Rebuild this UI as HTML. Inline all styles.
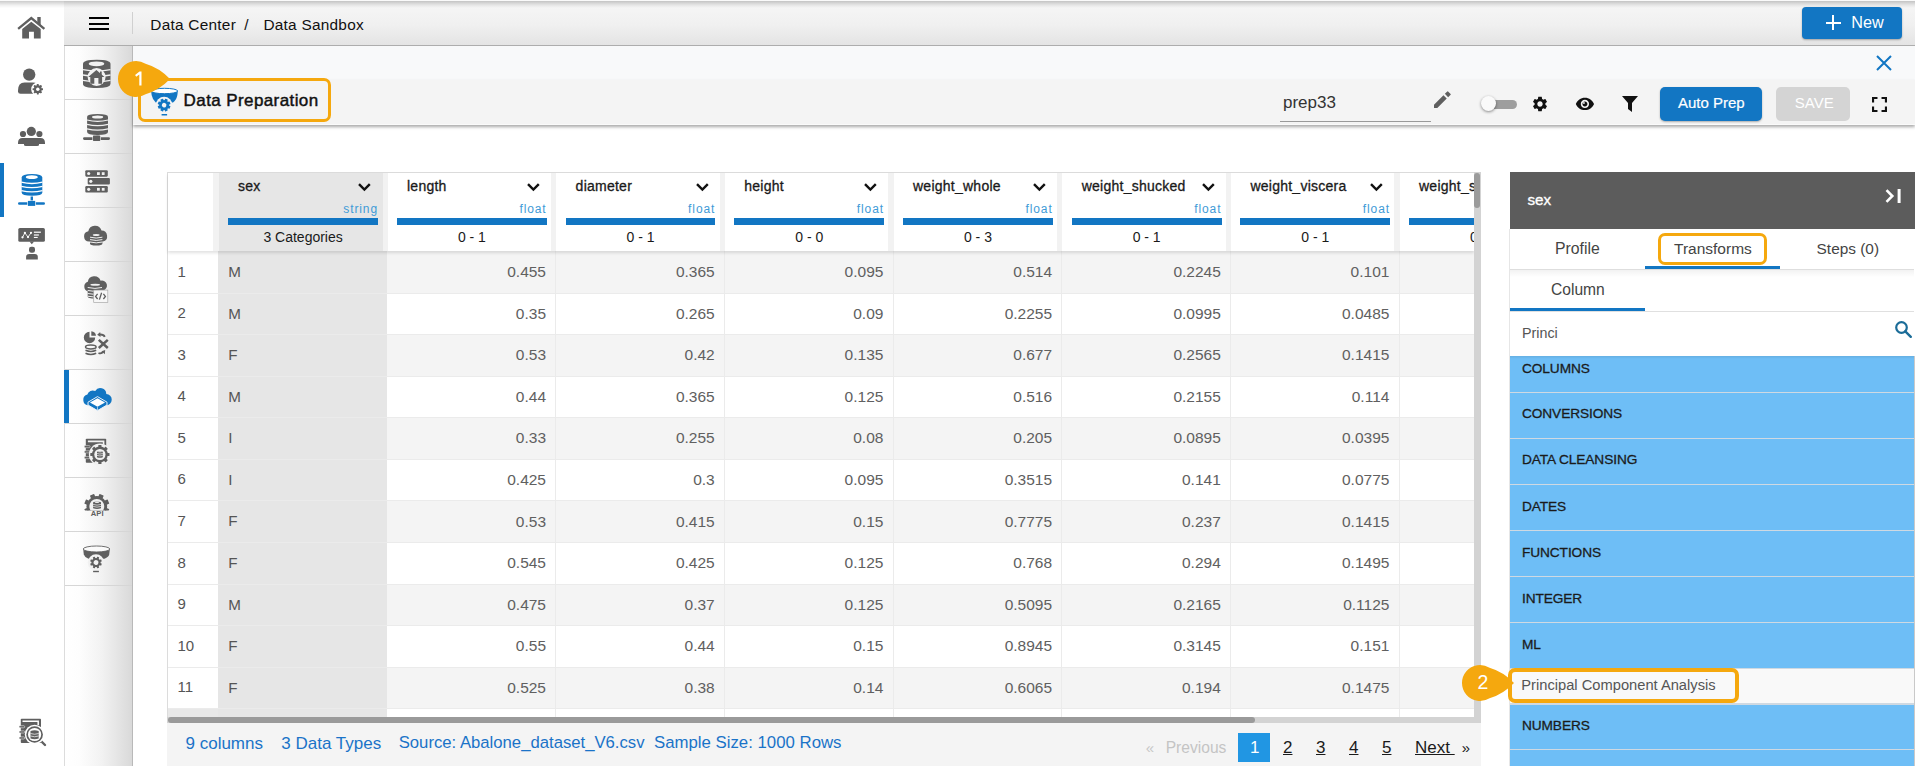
<!DOCTYPE html>
<html><head><meta charset="utf-8"><style>
*{box-sizing:border-box;margin:0;padding:0}
html,body{width:1915px;height:766px;overflow:hidden;background:#fff;font-family:"Liberation Sans",sans-serif;color:#222}
.a{position:absolute}
.t{position:absolute;white-space:pre;line-height:1}
svg{display:block;overflow:visible}
</style></head><body>
<div class="a" style="left:0px;top:0px;width:64px;height:766px;background:#fff;"></div>
<div class="a" style="left:64px;top:0px;width:1851px;height:46px;background:linear-gradient(#f5f5f5 15%,#f0f0f0 55%,#e4e4e4);border-bottom:1px solid #adadad"></div>
<div class="a" style="left:0px;top:1px;width:1915px;height:7px;background:linear-gradient(rgba(0,0,0,.20),rgba(0,0,0,.06) 60%,rgba(0,0,0,0));"></div>
<div class="a" style="left:0px;top:0px;width:1915px;height:1px;background:#fafafa;"></div>
<svg class="a" style="left:12px;top:8px" width="40" height="40" viewBox="0 0 40 40"><path d="M7 20.2 L19.3 10 L31.5 20.2" stroke="#5f5f5f" stroke-width="2.3" fill="none" stroke-linecap="square"/><path d="M25.3 9.1 H28.7 V17.2 L25.3 14.4z" fill="#5f5f5f"/><path d="M10.2 21 L19.3 13.8 L28.7 21 V30.5 H21.9 V23.8 H17 V30.5 H10.2z" fill="#5f5f5f"/></svg>
<svg class="a" style="left:10px;top:55px" width="40" height="40" viewBox="0 0 40 40"><circle cx="19.2" cy="19.6" r="6.2" fill="#5f5f5f"/><path d="M8 35.5 Q8 27.4 14.5 27.4 H23 Q25.5 27.4 26.5 28.5 L24 38.8 H10.5 Q8 38.8 8 36.5z" fill="#5f5f5f"/><circle cx="27.8" cy="34.2" r="6.6" fill="#fff"/><g transform="translate(27.8 34.2) rotate(0)"><circle r="3.9" fill="#5f5f5f"/><rect x="-1.0" y="-5.2" width="2.0" height="2.3000000000000003" rx=".4" fill="#5f5f5f" transform="rotate(0.0)"/><rect x="-1.0" y="-5.2" width="2.0" height="2.3000000000000003" rx=".4" fill="#5f5f5f" transform="rotate(45.0)"/><rect x="-1.0" y="-5.2" width="2.0" height="2.3000000000000003" rx=".4" fill="#5f5f5f" transform="rotate(90.0)"/><rect x="-1.0" y="-5.2" width="2.0" height="2.3000000000000003" rx=".4" fill="#5f5f5f" transform="rotate(135.0)"/><rect x="-1.0" y="-5.2" width="2.0" height="2.3000000000000003" rx=".4" fill="#5f5f5f" transform="rotate(180.0)"/><rect x="-1.0" y="-5.2" width="2.0" height="2.3000000000000003" rx=".4" fill="#5f5f5f" transform="rotate(225.0)"/><rect x="-1.0" y="-5.2" width="2.0" height="2.3000000000000003" rx=".4" fill="#5f5f5f" transform="rotate(270.0)"/><rect x="-1.0" y="-5.2" width="2.0" height="2.3000000000000003" rx=".4" fill="#5f5f5f" transform="rotate(315.0)"/><circle r="1.7" fill="#fff"/></g></svg>
<svg class="a" style="left:10px;top:116px" width="40" height="40" viewBox="0 0 40 40"><circle cx="21.3" cy="15.4" r="4.6" fill="#5f5f5f"/><circle cx="13" cy="18" r="3.1" fill="#5f5f5f"/><circle cx="29.4" cy="18" r="3.1" fill="#5f5f5f"/><path d="M8 27 Q8 22 12.5 22 H30.5 Q35 22 35 27 V28 H29 V29 Q29 30 27 30 H16 Q14 30 14 29 V28 H8z" fill="#5f5f5f"/></svg>
<svg class="a" style="left:12px;top:168px" width="40" height="40" viewBox="0 0 40 40"><path d="M9.7 9.5 Q9.7 6 20 6 Q30.3 6 30.3 9.5 V24.5 Q30.3 27.7 20 27.7 Q9.7 27.7 9.7 24.5z" fill="#1276c3"/><ellipse cx="19.8" cy="9.2" rx="6" ry="1.9" fill="#fff"/><path d="M9.3 14.2 Q19.9 16.8 30.5 14.2" stroke="#fff" stroke-width="1.25" fill="none"/><path d="M9.3 18.4 Q19.9 21.0 30.5 18.4" stroke="#fff" stroke-width="1.25" fill="none"/><path d="M9.3 22.6 Q19.9 25.200000000000003 30.5 22.6" stroke="#fff" stroke-width="1.25" fill="none"/><rect x="18.6" y="28.5" width="2.4" height="4.5" fill="#1276c3"/><rect x="6" y="34.2" width="27" height="2.6" rx="1.3" fill="#1276c3"/><rect x="15.3" y="32.4" width="8.5" height="6" fill="#fff"/><rect x="15.9" y="32.9" width="7.3" height="5" fill="#1276c3"/></svg>
<svg class="a" style="left:12px;top:222px" width="40" height="40" viewBox="0 0 40 40"><rect x="6.3" y="6" width="26.6" height="13.8" rx="1.6" fill="#5f5f5f"/><path d="M17.5 19.6 L19.8 22.3 L22.1 19.6z" fill="#5f5f5f"/><path d="M10.5 15.3 L12.9 10.9 L16 15.1 L19 10.8" stroke="#fff" stroke-width=".9" fill="none"/><circle cx="10.5" cy="15.3" r="1.15" fill="#fff"/><circle cx="12.9" cy="10.9" r="1.15" fill="#fff"/><circle cx="16" cy="15.1" r="1.15" fill="#fff"/><circle cx="19" cy="10.8" r="1.15" fill="#fff"/><rect x="21.9" y="9.6" width="7" height="1.2" fill="#fff"/><rect x="21.9" y="12.4" width="5" height="1.2" fill="#fff"/><rect x="21.9" y="14.9" width="3.8" height="1.1" fill="#fff"/><rect x="17" y="24.8" width="6" height="6" rx="2.3" fill="#5f5f5f"/><path d="M14.1 37.6 V35 Q14.1 32.1 17 32.1 H23 Q25.8 32.1 25.8 35 V37.6z" fill="#5f5f5f"/></svg>
<svg class="a" style="left:10px;top:700px" width="40" height="40" viewBox="0 0 40 40"><rect x="10.8" y="18.8" width="20.2" height="24.3" rx=".8" fill="#5f5f5f"/><path d="M12.5 21.3 H28.2 V25" stroke="#fff" stroke-width="1.5" fill="none"/><rect x="9" y="25.7" width="5.7" height="2.1" rx="1" fill="#5f5f5f" stroke="#fff" stroke-width=".5"/><rect x="9" y="30.9" width="5.7" height="2.1" rx="1" fill="#5f5f5f" stroke="#fff" stroke-width=".5"/><rect x="9" y="36.9" width="5.7" height="2.1" rx="1" fill="#5f5f5f" stroke="#fff" stroke-width=".5"/><path d="M31 41 L35 45" stroke="#5f5f5f" stroke-width="2.4" stroke-linecap="round"/><circle cx="24.6" cy="34.5" r="9.8" fill="#fff"/><circle cx="24.6" cy="34.5" r="8.3" fill="#5f5f5f"/><circle cx="24.6" cy="34.5" r="6.6" fill="#fff"/><path d="M20.5 31 Q24.6 29.5 28.7 31 V38.5 Q24.6 40 20.5 38.5z" fill="#5f5f5f"/><path d="M20.5 33.5 Q24.6 35 28.7 33.5 M20.5 36 Q24.6 37.5 28.7 36" stroke="#fff" stroke-width=".7" fill="none"/></svg>
<div class="a" style="left:0px;top:163px;width:4px;height:54px;background:#1276c3;"></div>
<div class="a" style="left:89px;top:17px;width:20px;height:2px;background:#000;"></div>
<div class="a" style="left:89px;top:22.5px;width:20px;height:2px;background:#000;"></div>
<div class="a" style="left:89px;top:28px;width:20px;height:2px;background:#000;"></div>
<div class="a" style="left:132px;top:12px;width:1px;height:22px;background:#d0d0d0;"></div>
<div class="t " style="left:150.30px;top:16.56px;font-size:15.4px;color:#111;letter-spacing:.25px">Data Center</div>
<div class="t " style="left:244.30px;top:16.56px;font-size:15.4px;color:#111;">/</div>
<div class="t " style="left:263.40px;top:16.56px;font-size:15.4px;color:#111;letter-spacing:.25px">Data Sandbox</div>
<div class="a" style="left:1802px;top:7px;width:100px;height:32px;background:#1276c3;border-radius:4px;box-shadow:0 1px 2px rgba(0,0,0,.3)"></div>
<div class="a" style="left:1825.8px;top:21.5px;width:15.2px;height:2.2px;background:#fff;"></div>
<div class="a" style="left:1832.3px;top:14.8px;width:2.2px;height:15.4px;background:#fff;"></div>
<div class="t " style="left:1851.30px;top:14.48px;font-size:16.2px;color:#fff;">New</div>
<div class="a" style="left:64px;top:46px;width:69px;height:720px;background:linear-gradient(90deg,#fff 0%,#fdfdfd 22%,#f2f2f2 55%,#d9d9d9 100%);border-right:1px solid #b9b9b9;border-left:1px solid #dcdcdc"></div>
<div class="a" style="left:65px;top:99px;width:67px;height:1px;background:#d6d6d6;"></div>
<div class="a" style="left:65px;top:153px;width:67px;height:1px;background:#d6d6d6;"></div>
<div class="a" style="left:65px;top:207px;width:67px;height:1px;background:#d6d6d6;"></div>
<div class="a" style="left:65px;top:261px;width:67px;height:1px;background:#d6d6d6;"></div>
<div class="a" style="left:65px;top:315px;width:67px;height:1px;background:#d6d6d6;"></div>
<div class="a" style="left:65px;top:369px;width:67px;height:1px;background:#d6d6d6;"></div>
<div class="a" style="left:65px;top:423px;width:67px;height:1px;background:#d6d6d6;"></div>
<div class="a" style="left:65px;top:477px;width:67px;height:1px;background:#d6d6d6;"></div>
<div class="a" style="left:65px;top:531px;width:67px;height:1px;background:#d6d6d6;"></div>
<div class="a" style="left:65px;top:585px;width:67px;height:1px;background:#d6d6d6;"></div>
<div class="a" style="left:64px;top:370px;width:5px;height:53px;background:#1276c3;"></div>
<div class="a" style="left:133px;top:46px;width:1782px;height:34px;background:#f8f9fa;"></div>
<div class="a" style="left:133px;top:80px;width:1782px;height:45px;background:#f4f4f4;border-bottom:1px solid #fafafa;box-shadow:0 2px 3px rgba(0,0,0,.34)"></div>
<svg class="a" style="left:1876px;top:55px;" width="16" height="16" viewBox="0 0 16 16"><path d="M1 1 L15 15 M15 1 L1 15" stroke="#1276c3" stroke-width="2"/></svg>
<svg class="a" style="left:110px;top:55px" width="80" height="70" viewBox="0 0 80 70"><path d="M41.1 36 L41.6 40 Q42.5 44.5 45.7 47.5 L63 47.5 Q66.7 44.5 67.4 40 L67.8 36z" fill="#1276c3"/><ellipse cx="54.4" cy="36" rx="13.3" ry="2.7" fill="#fff" stroke="#1276c3" stroke-width="1"/><circle cx="54.1" cy="50.1" r="8.3" fill="#f4f4f4"/><g transform="translate(54.1 50.1) rotate(22.5)"><circle r="5.0" fill="#1276c3"/><rect x="-1.45" y="-6.4" width="2.9" height="2.4000000000000004" rx=".4" fill="#1276c3" transform="rotate(0.0)"/><rect x="-1.45" y="-6.4" width="2.9" height="2.4000000000000004" rx=".4" fill="#1276c3" transform="rotate(45.0)"/><rect x="-1.45" y="-6.4" width="2.9" height="2.4000000000000004" rx=".4" fill="#1276c3" transform="rotate(90.0)"/><rect x="-1.45" y="-6.4" width="2.9" height="2.4000000000000004" rx=".4" fill="#1276c3" transform="rotate(135.0)"/><rect x="-1.45" y="-6.4" width="2.9" height="2.4000000000000004" rx=".4" fill="#1276c3" transform="rotate(180.0)"/><rect x="-1.45" y="-6.4" width="2.9" height="2.4000000000000004" rx=".4" fill="#1276c3" transform="rotate(225.0)"/><rect x="-1.45" y="-6.4" width="2.9" height="2.4000000000000004" rx=".4" fill="#1276c3" transform="rotate(270.0)"/><rect x="-1.45" y="-6.4" width="2.9" height="2.4000000000000004" rx=".4" fill="#1276c3" transform="rotate(315.0)"/><circle r="2.3" fill="#f4f4f4"/></g><rect x="51.6" y="59" width="5.5" height="1.5" fill="#1276c3"/></svg>
<div class="t " style="left:183.60px;top:91.91px;font-size:17px;color:#111;letter-spacing:.4px;-webkit-text-stroke:.45px #111">Data Preparation</div>
<div class="a" style="left:138px;top:78px;width:193px;height:43.5px;background:transparent;border:3.9px solid #f5a80e;border-radius:7px"></div>
<div class="t " style="left:1283.00px;top:94.31px;font-size:17px;color:#333;">prep33</div>
<div class="a" style="left:1280px;top:121px;width:151px;height:1px;background:#9a9a9a;"></div>
<svg class="a" style="left:1434px;top:90.8px;" width="17" height="17" viewBox="0 0 18 18"><path d="M0 14.5 V18 H3.5 L13.5 8 L10 4.5z M11.5 3 L15 6.5 L17.6 3.9 Q18 3.5 17.6 3.1 L14.9 0.4 Q14.5 0 14.1 0.4z" fill="#5f5f5f"/></svg>
<div class="a" style="left:1488px;top:99.5px;width:29px;height:9.5px;background:#9e9e9e;border-radius:5px"></div>
<div class="a" style="left:1481px;top:96px;width:15px;height:15px;background:#fafafa;border-radius:50%;box-shadow:0 1px 3px rgba(0,0,0,.45)"></div>
<svg class="a" style="left:1531.1px;top:94.8px" width="18" height="18" viewBox="0 0 24 24"><path fill="#111" fill-rule="evenodd" d="M19.14 12.94c.04-.3.06-.61.06-.94 0-.32-.02-.64-.07-.94l2.03-1.58c.18-.14.23-.41.12-.61l-1.92-3.32c-.12-.22-.37-.29-.59-.22l-2.39.96c-.5-.38-1.03-.7-1.62-.94l-.36-2.54c-.04-.24-.24-.41-.48-.41h-3.84c-.24 0-.43.17-.47.41l-.36 2.54c-.59.24-1.130.57-1.62.94l-2.39-.96c-.22-.08-.47 0-.59.22L2.74 8.87c-.12.21-.08.47.12.61l2.03 1.58c-.05.3-.09.63-.09.94s.02.64.07.94l-2.030 1.58c-.18.14-.23.41-.12.61l1.92 3.32c.12.22.37.29.59.22l2.39-.96c.5.38 1.03.7 1.62.94l.36 2.54c.05.24.24.41.48.41h3.84c.24 0 .44-.17.47-.41l.36-2.54c.59-.24 1.13-.56 1.62-.94l2.39.96c.22.08.47 0 .59-.22l1.92-3.32c.12-.22.07-.47-.12-.61l-2.01-1.58zM12 15.6c-1.98 0-3.6-1.62-3.6-3.6s1.62-3.6 3.6-3.6 3.6 1.620 3.6 3.6-1.62 3.6-3.6 3.6z"/></svg>
<svg class="a" style="left:1575px;top:94.2px" width="19.85" height="19.85" viewBox="0 0 24 24"><path fill="#111" d="M12 4.5C7 4.5 2.730 7.61 1 12c1.73 4.39 6 7.5 11 7.5s9.27-3.11 11-7.5c-1.73-4.39-6-7.5-11-7.5zM12 17c-2.76 0-5-2.24-5-5s2.24-5 5-5 5 2.24 5 5-2.24 5-5 5zm0-8c-1.66 0-3 1.34-3 3s1.34 3 3 3 3-1.34 3-3-1.34-3-3-3z"/><circle cx="10.8" cy="10.9" r="1.1" fill="#f4f4f4"/></svg>
<svg class="a" style="left:1622px;top:96px;" width="16" height="16" viewBox="0 0 16 16"><path d="M0 0 H16 L10 7 V16 L6 13 V7z" fill="#111"/></svg>
<div class="a" style="left:1660px;top:87px;width:102px;height:34px;background:#1276c3;border-radius:5px;box-shadow:0 1px 2px rgba(0,0,0,.3)"></div>
<div class="t " style="left:1678.00px;top:94.60px;font-size:15px;color:#fff;-webkit-text-stroke:.2px #fff">Auto Prep</div>
<div class="a" style="left:1776px;top:87px;width:74px;height:34px;background:#d4d4d4;border-radius:5px"></div>
<div class="t " style="left:1794.80px;top:94.80px;font-size:15px;color:#fff;">SAVE</div>
<svg class="a" style="left:1872px;top:97.2px;" width="15" height="15" viewBox="0 0 17 17"><path d="M1.2 6.2 V1.2 H6.2 M10.8 1.2 H15.8 V6.2 M15.8 10.8 V15.8 H10.8 M6.2 15.8 H1.2 V10.8" stroke="#111" stroke-width="2.4" fill="none"/></svg>
<div class="a" style="left:167px;top:172px;width:1314px;height:550px;background:#fff;border-left:1px solid #dcdcdc;border-top:1px solid #dcdcdc"></div>
<div class="a" style="left:168px;top:251px;width:1306px;height:466px;overflow:hidden">
<div class="a" style="left:219px;top:0.0px;width:1087px;height:41.59px;background:#f4f4f4;"></div>
<div class="a" style="left:0px;top:0.0px;width:50px;height:41.59px;background:#fff;"></div>
<div class="a" style="left:50px;top:0.0px;width:169px;height:41.59px;background:#e6e6e6;"></div>
<div class="a" style="left:219px;top:41.59000000000003px;width:1087px;height:41.59px;background:#fff;"></div>
<div class="a" style="left:0px;top:41.59000000000003px;width:50px;height:41.59px;background:#fff;"></div>
<div class="a" style="left:50px;top:41.59000000000003px;width:169px;height:41.59px;background:#e6e6e6;"></div>
<div class="a" style="left:219px;top:83.18px;width:1087px;height:41.59px;background:#f4f4f4;"></div>
<div class="a" style="left:0px;top:83.18px;width:50px;height:41.59px;background:#fff;"></div>
<div class="a" style="left:50px;top:83.18px;width:169px;height:41.59px;background:#e6e6e6;"></div>
<div class="a" style="left:219px;top:124.76999999999998px;width:1087px;height:41.59px;background:#fff;"></div>
<div class="a" style="left:0px;top:124.76999999999998px;width:50px;height:41.59px;background:#fff;"></div>
<div class="a" style="left:50px;top:124.76999999999998px;width:169px;height:41.59px;background:#e6e6e6;"></div>
<div class="a" style="left:219px;top:166.36px;width:1087px;height:41.59px;background:#f4f4f4;"></div>
<div class="a" style="left:0px;top:166.36px;width:50px;height:41.59px;background:#fff;"></div>
<div class="a" style="left:50px;top:166.36px;width:169px;height:41.59px;background:#e6e6e6;"></div>
<div class="a" style="left:219px;top:207.95000000000005px;width:1087px;height:41.59px;background:#fff;"></div>
<div class="a" style="left:0px;top:207.95000000000005px;width:50px;height:41.59px;background:#fff;"></div>
<div class="a" style="left:50px;top:207.95000000000005px;width:169px;height:41.59px;background:#e6e6e6;"></div>
<div class="a" style="left:219px;top:249.54000000000002px;width:1087px;height:41.59px;background:#f4f4f4;"></div>
<div class="a" style="left:0px;top:249.54000000000002px;width:50px;height:41.59px;background:#fff;"></div>
<div class="a" style="left:50px;top:249.54000000000002px;width:169px;height:41.59px;background:#e6e6e6;"></div>
<div class="a" style="left:219px;top:291.13px;width:1087px;height:41.59px;background:#fff;"></div>
<div class="a" style="left:0px;top:291.13px;width:50px;height:41.59px;background:#fff;"></div>
<div class="a" style="left:50px;top:291.13px;width:169px;height:41.59px;background:#e6e6e6;"></div>
<div class="a" style="left:219px;top:332.72px;width:1087px;height:41.59px;background:#f4f4f4;"></div>
<div class="a" style="left:0px;top:332.72px;width:50px;height:41.59px;background:#fff;"></div>
<div class="a" style="left:50px;top:332.72px;width:169px;height:41.59px;background:#e6e6e6;"></div>
<div class="a" style="left:219px;top:374.31000000000006px;width:1087px;height:41.59px;background:#fff;"></div>
<div class="a" style="left:0px;top:374.31000000000006px;width:50px;height:41.59px;background:#fff;"></div>
<div class="a" style="left:50px;top:374.31000000000006px;width:169px;height:41.59px;background:#e6e6e6;"></div>
<div class="a" style="left:219px;top:415.9000000000001px;width:1087px;height:41.59px;background:#f4f4f4;"></div>
<div class="a" style="left:0px;top:415.9000000000001px;width:50px;height:41.59px;background:#fff;"></div>
<div class="a" style="left:50px;top:415.9000000000001px;width:169px;height:41.59px;background:#e6e6e6;"></div>
<div class="a" style="left:219px;top:457.49px;width:1087px;height:41.59px;background:#fff;"></div>
<div class="a" style="left:0px;top:457.49px;width:50px;height:41.59px;background:#e8e8e8;"></div>
<div class="a" style="left:50px;top:457.49px;width:169px;height:41.59px;background:#e6e6e6;"></div>
<div class="a" style="left:0px;top:41.54px;width:1306px;height:1px;background:#ebebeb;"></div>
<div class="a" style="left:0px;top:83.13px;width:1306px;height:1px;background:#ebebeb;"></div>
<div class="a" style="left:0px;top:124.72px;width:1306px;height:1px;background:#ebebeb;"></div>
<div class="a" style="left:0px;top:166.31px;width:1306px;height:1px;background:#ebebeb;"></div>
<div class="a" style="left:0px;top:207.9px;width:1306px;height:1px;background:#ebebeb;"></div>
<div class="a" style="left:0px;top:249.49px;width:1306px;height:1px;background:#ebebeb;"></div>
<div class="a" style="left:0px;top:291.08px;width:1306px;height:1px;background:#ebebeb;"></div>
<div class="a" style="left:0px;top:332.67px;width:1306px;height:1px;background:#ebebeb;"></div>
<div class="a" style="left:0px;top:374.26px;width:1306px;height:1px;background:#ebebeb;"></div>
<div class="a" style="left:0px;top:415.85px;width:1306px;height:1px;background:#ebebeb;"></div>
<div class="a" style="left:0px;top:457.44px;width:1306px;height:1px;background:#ebebeb;"></div>
<div class="a" style="left:0px;top:499.03px;width:1306px;height:1px;background:#ebebeb;"></div>
<div class="a" style="left:387px;top:0px;width:1px;height:466px;background:#ebebeb;"></div>
<div class="a" style="left:556px;top:0px;width:1px;height:466px;background:#ebebeb;"></div>
<div class="a" style="left:725px;top:0px;width:1px;height:466px;background:#ebebeb;"></div>
<div class="a" style="left:893px;top:0px;width:1px;height:466px;background:#ebebeb;"></div>
<div class="a" style="left:1062px;top:0px;width:1px;height:466px;background:#ebebeb;"></div>
<div class="a" style="left:1231px;top:0px;width:1px;height:466px;background:#ebebeb;"></div>
<div class="t " style="left:9.50px;top:12.50px;font-size:15px;color:#555;">1</div>
<div class="t " style="left:60.30px;top:12.93px;font-size:15.2px;color:#555;">M</div>
<div class="t" style="left:258.00px;width:120px;text-align:right;top:13.08px;font-size:15.5px;color:#606060">0.455</div>
<div class="t" style="left:426.70px;width:120px;text-align:right;top:13.08px;font-size:15.5px;color:#606060">0.365</div>
<div class="t" style="left:595.40px;width:120px;text-align:right;top:13.08px;font-size:15.5px;color:#606060">0.095</div>
<div class="t" style="left:764.10px;width:120px;text-align:right;top:13.08px;font-size:15.5px;color:#606060">0.514</div>
<div class="t" style="left:932.80px;width:120px;text-align:right;top:13.08px;font-size:15.5px;color:#606060">0.2245</div>
<div class="t" style="left:1101.40px;width:120px;text-align:right;top:13.08px;font-size:15.5px;color:#606060">0.101</div>
<div class="t " style="left:9.50px;top:54.09px;font-size:15px;color:#555;">2</div>
<div class="t " style="left:60.30px;top:54.52px;font-size:15.2px;color:#555;">M</div>
<div class="t" style="left:258.00px;width:120px;text-align:right;top:54.67px;font-size:15.5px;color:#606060">0.35</div>
<div class="t" style="left:426.70px;width:120px;text-align:right;top:54.67px;font-size:15.5px;color:#606060">0.265</div>
<div class="t" style="left:595.40px;width:120px;text-align:right;top:54.67px;font-size:15.5px;color:#606060">0.09</div>
<div class="t" style="left:764.10px;width:120px;text-align:right;top:54.67px;font-size:15.5px;color:#606060">0.2255</div>
<div class="t" style="left:932.80px;width:120px;text-align:right;top:54.67px;font-size:15.5px;color:#606060">0.0995</div>
<div class="t" style="left:1101.40px;width:120px;text-align:right;top:54.67px;font-size:15.5px;color:#606060">0.0485</div>
<div class="t " style="left:9.50px;top:95.68px;font-size:15px;color:#555;">3</div>
<div class="t " style="left:60.30px;top:96.11px;font-size:15.2px;color:#555;">F</div>
<div class="t" style="left:258.00px;width:120px;text-align:right;top:96.26px;font-size:15.5px;color:#606060">0.53</div>
<div class="t" style="left:426.70px;width:120px;text-align:right;top:96.26px;font-size:15.5px;color:#606060">0.42</div>
<div class="t" style="left:595.40px;width:120px;text-align:right;top:96.26px;font-size:15.5px;color:#606060">0.135</div>
<div class="t" style="left:764.10px;width:120px;text-align:right;top:96.26px;font-size:15.5px;color:#606060">0.677</div>
<div class="t" style="left:932.80px;width:120px;text-align:right;top:96.26px;font-size:15.5px;color:#606060">0.2565</div>
<div class="t" style="left:1101.40px;width:120px;text-align:right;top:96.26px;font-size:15.5px;color:#606060">0.1415</div>
<div class="t " style="left:9.50px;top:137.27px;font-size:15px;color:#555;">4</div>
<div class="t " style="left:60.30px;top:137.70px;font-size:15.2px;color:#555;">M</div>
<div class="t" style="left:258.00px;width:120px;text-align:right;top:137.85px;font-size:15.5px;color:#606060">0.44</div>
<div class="t" style="left:426.70px;width:120px;text-align:right;top:137.85px;font-size:15.5px;color:#606060">0.365</div>
<div class="t" style="left:595.40px;width:120px;text-align:right;top:137.85px;font-size:15.5px;color:#606060">0.125</div>
<div class="t" style="left:764.10px;width:120px;text-align:right;top:137.85px;font-size:15.5px;color:#606060">0.516</div>
<div class="t" style="left:932.80px;width:120px;text-align:right;top:137.85px;font-size:15.5px;color:#606060">0.2155</div>
<div class="t" style="left:1101.40px;width:120px;text-align:right;top:137.85px;font-size:15.5px;color:#606060">0.114</div>
<div class="t " style="left:9.50px;top:178.86px;font-size:15px;color:#555;">5</div>
<div class="t " style="left:60.30px;top:179.29px;font-size:15.2px;color:#555;">I</div>
<div class="t" style="left:258.00px;width:120px;text-align:right;top:179.44px;font-size:15.5px;color:#606060">0.33</div>
<div class="t" style="left:426.70px;width:120px;text-align:right;top:179.44px;font-size:15.5px;color:#606060">0.255</div>
<div class="t" style="left:595.40px;width:120px;text-align:right;top:179.44px;font-size:15.5px;color:#606060">0.08</div>
<div class="t" style="left:764.10px;width:120px;text-align:right;top:179.44px;font-size:15.5px;color:#606060">0.205</div>
<div class="t" style="left:932.80px;width:120px;text-align:right;top:179.44px;font-size:15.5px;color:#606060">0.0895</div>
<div class="t" style="left:1101.40px;width:120px;text-align:right;top:179.44px;font-size:15.5px;color:#606060">0.0395</div>
<div class="t " style="left:9.50px;top:220.45px;font-size:15px;color:#555;">6</div>
<div class="t " style="left:60.30px;top:220.88px;font-size:15.2px;color:#555;">I</div>
<div class="t" style="left:258.00px;width:120px;text-align:right;top:221.03px;font-size:15.5px;color:#606060">0.425</div>
<div class="t" style="left:426.70px;width:120px;text-align:right;top:221.03px;font-size:15.5px;color:#606060">0.3</div>
<div class="t" style="left:595.40px;width:120px;text-align:right;top:221.03px;font-size:15.5px;color:#606060">0.095</div>
<div class="t" style="left:764.10px;width:120px;text-align:right;top:221.03px;font-size:15.5px;color:#606060">0.3515</div>
<div class="t" style="left:932.80px;width:120px;text-align:right;top:221.03px;font-size:15.5px;color:#606060">0.141</div>
<div class="t" style="left:1101.40px;width:120px;text-align:right;top:221.03px;font-size:15.5px;color:#606060">0.0775</div>
<div class="t " style="left:9.50px;top:262.04px;font-size:15px;color:#555;">7</div>
<div class="t " style="left:60.30px;top:262.47px;font-size:15.2px;color:#555;">F</div>
<div class="t" style="left:258.00px;width:120px;text-align:right;top:262.62px;font-size:15.5px;color:#606060">0.53</div>
<div class="t" style="left:426.70px;width:120px;text-align:right;top:262.62px;font-size:15.5px;color:#606060">0.415</div>
<div class="t" style="left:595.40px;width:120px;text-align:right;top:262.62px;font-size:15.5px;color:#606060">0.15</div>
<div class="t" style="left:764.10px;width:120px;text-align:right;top:262.62px;font-size:15.5px;color:#606060">0.7775</div>
<div class="t" style="left:932.80px;width:120px;text-align:right;top:262.62px;font-size:15.5px;color:#606060">0.237</div>
<div class="t" style="left:1101.40px;width:120px;text-align:right;top:262.62px;font-size:15.5px;color:#606060">0.1415</div>
<div class="t " style="left:9.50px;top:303.63px;font-size:15px;color:#555;">8</div>
<div class="t " style="left:60.30px;top:304.06px;font-size:15.2px;color:#555;">F</div>
<div class="t" style="left:258.00px;width:120px;text-align:right;top:304.21px;font-size:15.5px;color:#606060">0.545</div>
<div class="t" style="left:426.70px;width:120px;text-align:right;top:304.21px;font-size:15.5px;color:#606060">0.425</div>
<div class="t" style="left:595.40px;width:120px;text-align:right;top:304.21px;font-size:15.5px;color:#606060">0.125</div>
<div class="t" style="left:764.10px;width:120px;text-align:right;top:304.21px;font-size:15.5px;color:#606060">0.768</div>
<div class="t" style="left:932.80px;width:120px;text-align:right;top:304.21px;font-size:15.5px;color:#606060">0.294</div>
<div class="t" style="left:1101.40px;width:120px;text-align:right;top:304.21px;font-size:15.5px;color:#606060">0.1495</div>
<div class="t " style="left:9.50px;top:345.22px;font-size:15px;color:#555;">9</div>
<div class="t " style="left:60.30px;top:345.65px;font-size:15.2px;color:#555;">M</div>
<div class="t" style="left:258.00px;width:120px;text-align:right;top:345.80px;font-size:15.5px;color:#606060">0.475</div>
<div class="t" style="left:426.70px;width:120px;text-align:right;top:345.80px;font-size:15.5px;color:#606060">0.37</div>
<div class="t" style="left:595.40px;width:120px;text-align:right;top:345.80px;font-size:15.5px;color:#606060">0.125</div>
<div class="t" style="left:764.10px;width:120px;text-align:right;top:345.80px;font-size:15.5px;color:#606060">0.5095</div>
<div class="t" style="left:932.80px;width:120px;text-align:right;top:345.80px;font-size:15.5px;color:#606060">0.2165</div>
<div class="t" style="left:1101.40px;width:120px;text-align:right;top:345.80px;font-size:15.5px;color:#606060">0.1125</div>
<div class="t " style="left:9.50px;top:386.81px;font-size:15px;color:#555;">10</div>
<div class="t " style="left:60.30px;top:387.24px;font-size:15.2px;color:#555;">F</div>
<div class="t" style="left:258.00px;width:120px;text-align:right;top:387.39px;font-size:15.5px;color:#606060">0.55</div>
<div class="t" style="left:426.70px;width:120px;text-align:right;top:387.39px;font-size:15.5px;color:#606060">0.44</div>
<div class="t" style="left:595.40px;width:120px;text-align:right;top:387.39px;font-size:15.5px;color:#606060">0.15</div>
<div class="t" style="left:764.10px;width:120px;text-align:right;top:387.39px;font-size:15.5px;color:#606060">0.8945</div>
<div class="t" style="left:932.80px;width:120px;text-align:right;top:387.39px;font-size:15.5px;color:#606060">0.3145</div>
<div class="t" style="left:1101.40px;width:120px;text-align:right;top:387.39px;font-size:15.5px;color:#606060">0.151</div>
<div class="t " style="left:9.50px;top:428.40px;font-size:15px;color:#555;">11</div>
<div class="t " style="left:60.30px;top:428.83px;font-size:15.2px;color:#555;">F</div>
<div class="t" style="left:258.00px;width:120px;text-align:right;top:428.98px;font-size:15.5px;color:#606060">0.525</div>
<div class="t" style="left:426.70px;width:120px;text-align:right;top:428.98px;font-size:15.5px;color:#606060">0.38</div>
<div class="t" style="left:595.40px;width:120px;text-align:right;top:428.98px;font-size:15.5px;color:#606060">0.14</div>
<div class="t" style="left:764.10px;width:120px;text-align:right;top:428.98px;font-size:15.5px;color:#606060">0.6065</div>
<div class="t" style="left:932.80px;width:120px;text-align:right;top:428.98px;font-size:15.5px;color:#606060">0.194</div>
<div class="t" style="left:1101.40px;width:120px;text-align:right;top:428.98px;font-size:15.5px;color:#606060">0.1475</div>
</div>
<div class="a" style="left:168px;top:173px;width:1306px;height:78px;overflow:hidden;box-shadow:0 2px 3px rgba(0,0,0,.12)">
<div class="a" style="left:0px;top:0px;width:1306px;height:78px;background:#f2f2f2;"></div>
<div class="a" style="left:0px;top:0px;width:45px;height:78px;background:#fff;"></div>
<div class="a" style="left:50.5px;top:0px;width:164px;height:78px;background:#e6e6e6;"></div>
<div class="t " style="left:70.00px;top:6.45px;font-size:14px;color:#1a1a1a;letter-spacing:.25px;-webkit-text-stroke:.3px #1a1a1a">sex</div>
<svg class="a" style="left:190.3px;top:9.800000000000011px;" width="12.8" height="7.8" viewBox="0 0 12.8 7.8"><path d="M1 1.1 L6.4 6.5 L11.8 1.1" stroke="#111" stroke-width="2.4" fill="none"/></svg>
<div class="t" style="left:110.00px;width:100px;text-align:right;top:29.84px;font-size:12px;letter-spacing:.9px;margin-right:-.9px;color:#3f9bd7">string</div>
<div class="a" style="left:60px;top:45px;width:150.2px;height:7px;background:#1276c3;"></div>
<div class="t" style="left:60.00px;width:150.20px;text-align:center;top:57.15px;font-size:14px;color:#1a1a1a">3 Categories</div>
<div class="a" style="left:219.5px;top:0px;width:163.60000000000002px;height:78px;background:#fff;"></div>
<div class="t " style="left:239.00px;top:6.45px;font-size:14px;color:#1a1a1a;letter-spacing:.25px;-webkit-text-stroke:.3px #1a1a1a">length</div>
<svg class="a" style="left:358.90000000000003px;top:9.800000000000011px;" width="12.8" height="7.8" viewBox="0 0 12.8 7.8"><path d="M1 1.1 L6.4 6.5 L11.8 1.1" stroke="#111" stroke-width="2.4" fill="none"/></svg>
<div class="t" style="left:278.60px;width:100px;text-align:right;top:29.84px;font-size:12px;letter-spacing:.9px;margin-right:-.9px;color:#3f9bd7">float</div>
<div class="a" style="left:229px;top:45px;width:149.8px;height:7px;background:#1276c3;"></div>
<div class="t" style="left:229.00px;width:149.80px;text-align:center;top:57.15px;font-size:14px;color:#1a1a1a">0 - 1</div>
<div class="a" style="left:388.1px;top:0px;width:163.69999999999993px;height:78px;background:#fff;"></div>
<div class="t " style="left:407.60px;top:6.45px;font-size:14px;color:#1a1a1a;letter-spacing:.25px;-webkit-text-stroke:.3px #1a1a1a">diameter</div>
<svg class="a" style="left:527.5999999999999px;top:9.800000000000011px;" width="12.8" height="7.8" viewBox="0 0 12.8 7.8"><path d="M1 1.1 L6.4 6.5 L11.8 1.1" stroke="#111" stroke-width="2.4" fill="none"/></svg>
<div class="t" style="left:447.30px;width:100px;text-align:right;top:29.84px;font-size:12px;letter-spacing:.9px;margin-right:-.9px;color:#3f9bd7">float</div>
<div class="a" style="left:397.6px;top:45px;width:149.89999999999998px;height:7px;background:#1276c3;"></div>
<div class="t" style="left:397.60px;width:149.90px;text-align:center;top:57.15px;font-size:14px;color:#1a1a1a">0 - 1</div>
<div class="a" style="left:556.8px;top:0px;width:163.70000000000005px;height:78px;background:#fff;"></div>
<div class="t " style="left:576.30px;top:6.45px;font-size:14px;color:#1a1a1a;letter-spacing:.25px;-webkit-text-stroke:.3px #1a1a1a">height</div>
<svg class="a" style="left:696.3px;top:9.800000000000011px;" width="12.8" height="7.8" viewBox="0 0 12.8 7.8"><path d="M1 1.1 L6.4 6.5 L11.8 1.1" stroke="#111" stroke-width="2.4" fill="none"/></svg>
<div class="t" style="left:616.00px;width:100px;text-align:right;top:29.84px;font-size:12px;letter-spacing:.9px;margin-right:-.9px;color:#3f9bd7">float</div>
<div class="a" style="left:566.3px;top:45px;width:149.9000000000001px;height:7px;background:#1276c3;"></div>
<div class="t" style="left:566.30px;width:149.90px;text-align:center;top:57.15px;font-size:14px;color:#1a1a1a">0 - 0</div>
<div class="a" style="left:725.5px;top:0px;width:163.70000000000005px;height:78px;background:#fff;"></div>
<div class="t " style="left:745.00px;top:6.45px;font-size:14px;color:#1a1a1a;letter-spacing:.25px;-webkit-text-stroke:.3px #1a1a1a">weight_whole</div>
<svg class="a" style="left:865.0px;top:9.800000000000011px;" width="12.8" height="7.8" viewBox="0 0 12.8 7.8"><path d="M1 1.1 L6.4 6.5 L11.8 1.1" stroke="#111" stroke-width="2.4" fill="none"/></svg>
<div class="t" style="left:784.70px;width:100px;text-align:right;top:29.84px;font-size:12px;letter-spacing:.9px;margin-right:-.9px;color:#3f9bd7">float</div>
<div class="a" style="left:735px;top:45px;width:149.9000000000001px;height:7px;background:#1276c3;"></div>
<div class="t" style="left:735.00px;width:149.90px;text-align:center;top:57.15px;font-size:14px;color:#1a1a1a">0 - 3</div>
<div class="a" style="left:894.2px;top:0px;width:163.70000000000005px;height:78px;background:#fff;"></div>
<div class="t " style="left:913.70px;top:6.45px;font-size:14px;color:#1a1a1a;letter-spacing:.25px;-webkit-text-stroke:.3px #1a1a1a">weight_shucked</div>
<svg class="a" style="left:1033.7px;top:9.800000000000011px;" width="12.8" height="7.8" viewBox="0 0 12.8 7.8"><path d="M1 1.1 L6.4 6.5 L11.8 1.1" stroke="#111" stroke-width="2.4" fill="none"/></svg>
<div class="t" style="left:953.40px;width:100px;text-align:right;top:29.84px;font-size:12px;letter-spacing:.9px;margin-right:-.9px;color:#3f9bd7">float</div>
<div class="a" style="left:903.7px;top:45px;width:149.9000000000001px;height:7px;background:#1276c3;"></div>
<div class="t" style="left:903.70px;width:149.90px;text-align:center;top:57.15px;font-size:14px;color:#1a1a1a">0 - 1</div>
<div class="a" style="left:1062.9px;top:0px;width:163.5999999999999px;height:78px;background:#fff;"></div>
<div class="t " style="left:1082.40px;top:6.45px;font-size:14px;color:#1a1a1a;letter-spacing:.25px;-webkit-text-stroke:.3px #1a1a1a">weight_viscera</div>
<svg class="a" style="left:1202.3px;top:9.800000000000011px;" width="12.8" height="7.8" viewBox="0 0 12.8 7.8"><path d="M1 1.1 L6.4 6.5 L11.8 1.1" stroke="#111" stroke-width="2.4" fill="none"/></svg>
<div class="t" style="left:1122.00px;width:100px;text-align:right;top:29.84px;font-size:12px;letter-spacing:.9px;margin-right:-.9px;color:#3f9bd7">float</div>
<div class="a" style="left:1072.4px;top:45px;width:149.79999999999995px;height:7px;background:#1276c3;"></div>
<div class="t" style="left:1072.40px;width:149.80px;text-align:center;top:57.15px;font-size:14px;color:#1a1a1a">0 - 1</div>
<div class="a" style="left:1231.5px;top:0px;width:164px;height:78px;background:#fff;"></div>
<div class="t " style="left:1251.00px;top:6.45px;font-size:14px;color:#1a1a1a;letter-spacing:.25px;-webkit-text-stroke:.3px #1a1a1a">weight_shell</div>
<svg class="a" style="left:1371.3px;top:9.800000000000011px;" width="12.8" height="7.8" viewBox="0 0 12.8 7.8"><path d="M1 1.1 L6.4 6.5 L11.8 1.1" stroke="#111" stroke-width="2.4" fill="none"/></svg>
<div class="t" style="left:1291.00px;width:100px;text-align:right;top:29.84px;font-size:12px;letter-spacing:.9px;margin-right:-.9px;color:#3f9bd7">float</div>
<div class="a" style="left:1241px;top:45px;width:150.20000000000005px;height:7px;background:#1276c3;"></div>
<div class="t" style="left:1241.00px;width:150.20px;text-align:center;top:57.15px;font-size:14px;color:#1a1a1a">0 - 1</div>
</div>
<div class="a" style="left:1474px;top:172px;width:7px;height:550px;background:#d3d3d3;"></div>
<div class="a" style="left:1473.8px;top:173px;width:6px;height:34.8px;background:#9b9b9b;border-radius:3px"></div>
<div class="a" style="left:167px;top:717px;width:1314px;height:5.5px;background:#d3d3d3;"></div>
<div class="a" style="left:167.5px;top:717px;width:1087.5px;height:5.5px;background:#9a9a9a;border-radius:3px"></div>
<div class="a" style="left:167px;top:722.5px;width:1314px;height:44px;background:#f4f4f4;"></div>
<div class="t " style="left:185.50px;top:734.61px;font-size:17px;color:#1a73c8;">9 columns</div>
<div class="t " style="left:281.30px;top:734.61px;font-size:17px;color:#1a73c8;">3 Data Types</div>
<div class="t " style="left:398.70px;top:734.86px;font-size:16.7px;color:#1a73c8;">Source: Abalone_dataset_V6.csv</div>
<div class="t " style="left:654.00px;top:734.78px;font-size:16.8px;color:#1a73c8;">Sample Size: 1000 Rows</div>
<div class="t " style="left:1145.80px;top:739.80px;font-size:15px;color:#c8c8c8;">«</div>
<div class="t " style="left:1165.70px;top:740.09px;font-size:15.6px;color:#c4c4c4;">Previous</div>
<div class="a" style="left:1238px;top:733px;width:32px;height:28.7px;background:#2196e3;"></div>
<div class="t " style="left:1250.00px;top:738.91px;font-size:17px;color:#fff;">1</div>
<div class="t " style="left:1283.00px;top:738.91px;font-size:17px;color:#1a1a1a;text-decoration:underline;text-underline-offset:1px">2</div>
<div class="t " style="left:1316.00px;top:738.91px;font-size:17px;color:#1a1a1a;text-decoration:underline;text-underline-offset:1px">3</div>
<div class="t " style="left:1349.00px;top:738.91px;font-size:17px;color:#1a1a1a;text-decoration:underline;text-underline-offset:1px">4</div>
<div class="t " style="left:1382.00px;top:738.91px;font-size:17px;color:#1a1a1a;text-decoration:underline;text-underline-offset:1px">5</div>
<div class="t " style="left:1415.00px;top:738.91px;font-size:17px;color:#1a1a1a;text-decoration:underline;text-underline-offset:1px">Next </div>
<div class="t " style="left:1461.80px;top:739.80px;font-size:15px;color:#1a1a1a;">»</div>
<div class="a" style="left:1510px;top:172px;width:405px;height:594px;background:#fff;"></div>
<div class="a" style="left:1509px;top:228.5px;width:1px;height:537.5px;background:#e6e6e6;"></div>
<div class="a" style="left:1510px;top:172px;width:405px;height:56.5px;background:#5c5c5c;"></div>
<div class="t " style="left:1527.50px;top:192.33px;font-size:15.2px;color:#fff;-webkit-text-stroke:.35px #fff">sex</div>
<svg class="a" style="left:1885px;top:188.5px;" width="16" height="14" viewBox="0 0 16 14"><path d="M1.5 1.2 L7.3 7 L1.5 12.8" stroke="#fff" stroke-width="2.6" fill="none"/><rect x="12.6" y="0" width="3" height="14" fill="#fff"/></svg>
<div class="a" style="left:1510px;top:268.5px;width:404px;height:1px;background:#dedede;"></div>
<div class="a" style="left:1645px;top:266.3px;width:135px;height:2.8px;background:#1276c3;"></div>
<div class="t " style="left:1555.00px;top:240.92px;font-size:15.8px;color:#444;">Profile</div>
<div class="t " style="left:1674.00px;top:241.18px;font-size:15.5px;color:#444;">Transforms</div>
<div class="t " style="left:1816.60px;top:241.26px;font-size:15.4px;color:#444;">Steps (0)</div>
<div class="a" style="left:1657.5px;top:232.5px;width:109.5px;height:32.2px;background:transparent;border:3.7px solid #f5a80e;border-radius:7px"></div>
<div class="a" style="left:1510px;top:310.5px;width:404px;height:1px;background:#e0e0e0;"></div>
<div class="a" style="left:1510px;top:308.3px;width:135px;height:2.9px;background:#1276c3;"></div>
<div class="t " style="left:1551.00px;top:282.39px;font-size:15.6px;color:#444;">Column</div>
<div class="a" style="left:1510px;top:269.5px;width:404px;height:7px;background:linear-gradient(rgba(0,0,0,.05),rgba(0,0,0,0));"></div>
<div class="t " style="left:1522.00px;top:325.89px;font-size:14.3px;color:#555;">Princi</div>
<svg class="a" style="left:1895px;top:321px;" width="17" height="17" viewBox="0 0 17 17"><circle cx="6.5" cy="6.5" r="5.3" stroke="#1b6c98" stroke-width="2.2" fill="none"/><path d="M10.3 10.3 L15.8 15.8" stroke="#1b6c98" stroke-width="2.4" stroke-linecap="round"/></svg>
<div class="a" style="left:1510px;top:356px;width:404px;height:410px;background:#6ebef6;"></div>
<div class="a" style="left:1914px;top:356px;width:1px;height:410px;background:#c9c9c9;"></div>
<div class="a" style="left:1510px;top:356px;width:404px;height:3px;background:linear-gradient(rgba(0,0,0,.08),rgba(0,0,0,0));"></div>
<div class="t " style="left:1522.00px;top:361.70px;font-size:13.7px;color:#1b1b1b;letter-spacing:-.1px;-webkit-text-stroke:.3px #1b1b1b">COLUMNS</div>
<div class="a" style="left:1510px;top:392.0px;width:404px;height:1.3px;background:#cfd9e2;"></div>
<div class="t " style="left:1522.00px;top:407.40px;font-size:13.7px;color:#1b1b1b;letter-spacing:-.1px;-webkit-text-stroke:.3px #1b1b1b">CONVERSIONS</div>
<div class="a" style="left:1510px;top:437.7px;width:404px;height:1.3px;background:#cfd9e2;"></div>
<div class="t " style="left:1522.00px;top:453.40px;font-size:13.7px;color:#1b1b1b;letter-spacing:-.1px;-webkit-text-stroke:.3px #1b1b1b">DATA CLEANSING</div>
<div class="a" style="left:1510px;top:483.7px;width:404px;height:1.3px;background:#cfd9e2;"></div>
<div class="t " style="left:1522.00px;top:499.50px;font-size:13.7px;color:#1b1b1b;letter-spacing:-.1px;-webkit-text-stroke:.3px #1b1b1b">DATES</div>
<div class="a" style="left:1510px;top:529.8px;width:404px;height:1.3px;background:#cfd9e2;"></div>
<div class="t " style="left:1522.00px;top:545.50px;font-size:13.7px;color:#1b1b1b;letter-spacing:-.1px;-webkit-text-stroke:.3px #1b1b1b">FUNCTIONS</div>
<div class="a" style="left:1510px;top:575.8px;width:404px;height:1.3px;background:#cfd9e2;"></div>
<div class="t " style="left:1522.00px;top:591.50px;font-size:13.7px;color:#1b1b1b;letter-spacing:-.1px;-webkit-text-stroke:.3px #1b1b1b">INTEGER</div>
<div class="a" style="left:1510px;top:621.8px;width:404px;height:1.3px;background:#cfd9e2;"></div>
<div class="t " style="left:1522.00px;top:637.50px;font-size:13.7px;color:#1b1b1b;letter-spacing:-.1px;-webkit-text-stroke:.3px #1b1b1b">ML</div>
<div class="a" style="left:1510px;top:667.8px;width:404px;height:1.3px;background:#cfd9e2;"></div>
<div class="a" style="left:1510px;top:668.5px;width:404px;height:35px;background:#f9f9f9;"></div>
<div class="a" style="left:1510px;top:703.3px;width:404px;height:1.3px;background:#cfd9e2;"></div>
<div class="t " style="left:1521.30px;top:677.55px;font-size:14.7px;color:#555;">Principal Component Analysis</div>
<div class="a" style="left:1508.2px;top:668.2px;width:231px;height:35px;background:transparent;border:4px solid #f5a80e;border-radius:7px"></div>
<div class="t " style="left:1522.00px;top:718.90px;font-size:13.7px;color:#1b1b1b;letter-spacing:-.1px;-webkit-text-stroke:.3px #1b1b1b">NUMBERS</div>
<div class="a" style="left:1510px;top:749.2px;width:404px;height:1.3px;background:#cfd9e2;"></div>
<svg class="a" style="left:115.80000000000001px;top:58.8px;" width="56" height="40" viewBox="0 0 56 40"><path d="M29.53 4.73 Q43.26 8.73 54.00 20 Q43.26 31.27 29.53 35.27 A18 18 0 1 1 29.53 4.73z" fill="#f5a80e"/></svg>
<svg class="a" style="left:130px;top:65px" width="20" height="25" viewBox="130 65 20 25"><path d="M135.1 74.9 L139.5 71.5 H141.5 V85.6 H139.3 V74.6 L136.2 76.7z" fill="#fff"/></svg>
<svg class="a" style="left:1460px;top:663px;" width="56" height="40" viewBox="0 0 56 40"><path d="M29.53 4.73 Q43.26 8.73 54.00 20 Q43.26 31.27 29.53 35.27 A18 18 0 1 1 29.53 4.73z" fill="#f5a80e"/></svg>
<div class="t" style="left:1468px;width:30px;text-align:center;top:673.49px;font-size:19.5px;color:#fff">2</div>
<svg class="a" style="left:78px;top:52px" width="40" height="40" viewBox="0 0 40 40"><path d="M5 12 Q5 7.8 18.8 7.8 Q32.5 7.8 32.5 12 V32 Q32.5 36 18.8 36 Q5 36 5 32z" fill="#5f5f5f"/><ellipse cx="18.5" cy="11.8" rx="7.8" ry="2.4" fill="#f1f1f1"/><path d="M5 17.6 Q19 20.200000000000003 32.5 17.6" stroke="#f1f1f1" stroke-width="1.3" fill="none"/><path d="M5 23 Q19 25.6 32.5 23" stroke="#f1f1f1" stroke-width="1.3" fill="none"/><path d="M5 28.3 Q19 30.900000000000002 32.5 28.3" stroke="#f1f1f1" stroke-width="1.3" fill="none"/><circle cx="18.6" cy="25" r="9" fill="#f1f1f1"/><path d="M10.5 24.7 L18.4 18 L26.2 24.7 V24.9 H24.1 V31.7 H20.4 V26 H16.3 V31.7 H12.3 V24.9 H10.5z" fill="#5f5f5f"/><rect x="22" y="19.5" width="1.7" height="3.5" fill="#5f5f5f"/></svg>
<svg class="a" style="left:78px;top:108px" width="40" height="40" viewBox="0 0 40 40"><path d="M9.1 8.8 Q9.1 6 19.5 6 Q30 6 30 8.8 V24 Q30 26.9 19.5 26.9 Q9.1 26.9 9.1 24z" fill="#5f5f5f"/><ellipse cx="19.6" cy="9" rx="5.6" ry="1.5" fill="#f1f1f1"/><path d="M9 12 Q19.5 14.6 30.2 12" stroke="#f1f1f1" stroke-width="1.2" fill="none"/><path d="M9 16.4 Q19.5 19.0 30.2 16.4" stroke="#f1f1f1" stroke-width="1.2" fill="none"/><path d="M9 20.8 Q19.5 23.400000000000002 30.2 20.8" stroke="#f1f1f1" stroke-width="1.2" fill="none"/><rect x="18.4" y="26" width="2.3" height="2.5" fill="#5f5f5f"/><rect x="5" y="29.2" width="27" height="2.7" rx="1.3" fill="#5f5f5f"/><rect x="14.4" y="27.2" width="8.4" height="6.3" fill="#f1f1f1"/><rect x="15" y="27.6" width="7.2" height="5.3" rx=".6" fill="#5f5f5f"/></svg>
<svg class="a" style="left:78px;top:160px" width="40" height="40" viewBox="0 0 40 40"><rect x="7.3" y="10.2" width="22.5" height="6.5" rx="1.1" fill="#5f5f5f"/><rect x="9.7" y="18" width="22.2" height="6.5" rx="1.1" fill="#5f5f5f"/><rect x="7.3" y="26.1" width="22.5" height="6.5" rx="1.1" fill="#5f5f5f"/><circle cx="10.7" cy="13.5" r="1.6" fill="#f1f1f1"/><circle cx="12.8" cy="21.3" r="1.6" fill="#f1f1f1"/><circle cx="10.7" cy="29.3" r="1.6" fill="#f1f1f1"/><rect x="19" y="12.2" width="2.8" height="2.8" fill="#f1f1f1"/><rect x="19" y="27.9" width="2.8" height="2.8" fill="#f1f1f1"/><rect x="23.8" y="12.2" width="2.8" height="2.8" fill="#f1f1f1"/><rect x="23.8" y="27.9" width="2.8" height="2.8" fill="#f1f1f1"/></svg>
<svg class="a" style="left:78px;top:216px" width="40" height="40" viewBox="0 0 40 40"><path d="M11 25.6 A5.2 5.2 0 0 1 10.3 15.3 A6.8 6.8 0 0 1 23.5 14.6 A5.6 5.6 0 0 1 25 25.6z" fill="#5f5f5f"/><path d="M12 21 Q12 19 18.2 19 Q24.4 19 24.4 21 V27.5 Q24.4 29.6 18.2 29.6 Q12 29.6 12 27.5z" fill="#5f5f5f"/><ellipse cx="18.2" cy="19" rx="3.4" ry="1.1" fill="#f1f1f1"/><path d="M12 21.2 Q18.2 22.9 24.4 21.2" stroke="#f1f1f1" stroke-width="1" fill="none"/><path d="M12 23.6 Q18.2 25.3 24.4 23.6" stroke="#f1f1f1" stroke-width="1" fill="none"/><path d="M12 26 Q18.2 27.7 24.4 26" stroke="#f1f1f1" stroke-width="1" fill="none"/></svg>
<svg class="a" style="left:78px;top:270px" width="40" height="40" viewBox="0 0 40 40"><path d="M10.5 21.5 A5 5 0 0 1 9.8 11.8 A6.6 6.6 0 0 1 22.6 10.8 A5 5 0 0 1 25.3 20.5z" fill="#5f5f5f"/><path d="M9.7 15 Q9.7 13.3 17.3 13.3 Q24 13.3 24 15 V26.5 Q24 28.5 17 28.5 Q9.7 28.5 9.7 26.5z" fill="#5f5f5f"/><ellipse cx="17.2" cy="14.8" rx="4.8" ry="1" fill="#f1f1f1"/><path d="M9.7 17.5 Q17 19.3 24 17.5" stroke="#f1f1f1" stroke-width="1" fill="none"/><path d="M9.7 20.5 Q17 22.3 24 20.5" stroke="#f1f1f1" stroke-width="1" fill="none"/><path d="M9.7 23.5 Q17 25.3 24 23.5" stroke="#f1f1f1" stroke-width="1" fill="none"/><path d="M9.7 26.2 Q17 28.0 24 26.2" stroke="#f1f1f1" stroke-width="1" fill="none"/><rect x="15.7" y="20.1" width="14.1" height="12.5" fill="#f7f7f7" stroke="#a9a9a9" stroke-width=".7"/><path d="M19.6 23.8 L17.6 26.4 L19.6 29 M25.4 23.8 L27.4 26.4 L25.4 29 M23.6 22.8 L21.4 29.6" stroke="#5f5f5f" stroke-width="1.3" fill="none"/></svg>
<svg class="a" style="left:78px;top:324px" width="40" height="40" viewBox="0 0 40 40"><path d="M11.5 7.8 V13.4 H17.2 A5.7 5.7 0 1 1 11.5 7.8z" fill="#5f5f5f"/><path d="M13.3 7.3 A5.2 5.2 0 0 1 18 11.7 H13.3z" fill="#5f5f5f"/><path d="M26.8 12.8 Q25.5 10 21 10.6" stroke="#5f5f5f" stroke-width="1.8" fill="none"/><path d="M19.2 10.8 L22.2 8 L22.6 13z" fill="#5f5f5f"/><path d="M20.8 15.8 L29.8 24 M29.8 15.8 L20.8 24" stroke="#5f5f5f" stroke-width="2.5"/><ellipse cx="12.8" cy="23" rx="5.3" ry="1.9" fill="none" stroke="#5f5f5f" stroke-width="1.5"/><path d="M7.5 26.3 Q12.8 28.7 18.2 26.3 M7.5 29.3 Q12.8 31.7 18.2 29.3" stroke="#5f5f5f" stroke-width="1.5" fill="none"/><path d="M20.5 29 Q23.5 30.3 25.3 27.5" stroke="#5f5f5f" stroke-width="1.8" fill="none"/><path d="M27.2 26 L26.8 30.2 L23.5 27.3z" fill="#5f5f5f"/></svg>
<svg class="a" style="left:78px;top:378px" width="40" height="40" viewBox="0 0 40 40"><path d="M10 27.2 A5.4 5.4 0 0 1 9.4 16.6 A5.5 5.5 0 0 1 17.2 13 A6 6 0 0 1 28.3 16 A5.6 5.6 0 0 1 28 27.2z" fill="#1276c3"/><path d="M19.5 18.6 L29 24.2 V27 L19.5 32.6 L10 27 V24.2z" fill="#1276c3" stroke="#eaf2fa" stroke-width="1"/><path d="M19.5 20.2 L27 24.4 L19.5 28.8 L12 24.4z" fill="#fff"/><path d="M19.5 29.2 V32.3" stroke="#cfe2f3" stroke-width=".8"/></svg>
<svg class="a" style="left:78px;top:432px" width="40" height="40" viewBox="0 0 40 40"><rect x="7.8" y="6.8" width="20.4" height="24" rx=".8" fill="#5f5f5f"/><path d="M9.9 9.4 H25.6 V12.5" stroke="#f1f1f1" stroke-width="1.6" fill="none"/><rect x="6.3" y="13.6" width="5.8" height="2.1" rx="1" fill="#5f5f5f" stroke="#f1f1f1" stroke-width=".5"/><rect x="6.3" y="18.8" width="5.8" height="2.1" rx="1" fill="#5f5f5f" stroke="#f1f1f1" stroke-width=".5"/><rect x="6.3" y="24.6" width="5.8" height="2.1" rx="1" fill="#5f5f5f" stroke="#f1f1f1" stroke-width=".5"/><circle cx="21.9" cy="22.5" r="11" fill="#f1f1f1"/><g transform="translate(21.9 22.5) rotate(0)"><circle r="7.9" fill="#5f5f5f"/><rect x="-1.6" y="-9.6" width="3.2" height="2.6999999999999993" rx=".4" fill="#5f5f5f" transform="rotate(0.0)"/><rect x="-1.6" y="-9.6" width="3.2" height="2.6999999999999993" rx=".4" fill="#5f5f5f" transform="rotate(45.0)"/><rect x="-1.6" y="-9.6" width="3.2" height="2.6999999999999993" rx=".4" fill="#5f5f5f" transform="rotate(90.0)"/><rect x="-1.6" y="-9.6" width="3.2" height="2.6999999999999993" rx=".4" fill="#5f5f5f" transform="rotate(135.0)"/><rect x="-1.6" y="-9.6" width="3.2" height="2.6999999999999993" rx=".4" fill="#5f5f5f" transform="rotate(180.0)"/><rect x="-1.6" y="-9.6" width="3.2" height="2.6999999999999993" rx=".4" fill="#5f5f5f" transform="rotate(225.0)"/><rect x="-1.6" y="-9.6" width="3.2" height="2.6999999999999993" rx=".4" fill="#5f5f5f" transform="rotate(270.0)"/><rect x="-1.6" y="-9.6" width="3.2" height="2.6999999999999993" rx=".4" fill="#5f5f5f" transform="rotate(315.0)"/><circle r="5.6" fill="#f1f1f1"/></g><path d="M19 19.7 Q21.9 18.6 24.8 19.7 V25.3 Q21.9 26.4 19 25.3z" fill="#5f5f5f"/><path d="M19 21.5 Q21.9 22.6 24.8 21.5 M19 23.4 Q21.9 24.5 24.8 23.4" stroke="#f1f1f1" stroke-width=".7" fill="none"/><ellipse cx="21.9" cy="19.8" rx="1.8" ry=".5" fill="#f1f1f1"/></svg>
<svg class="a" style="left:78px;top:486px" width="40" height="40" viewBox="0 0 40 40"><defs><clipPath id="cpapi"><rect x="0" y="0" width="40" height="24.5"/></clipPath></defs><g clip-path="url(#cpapi)"><g transform="translate(18.8 20.4) rotate(22.5)"><circle r="10.3" fill="#5f5f5f"/><rect x="-2.3" y="-12.6" width="4.6" height="3.299999999999999" rx=".4" fill="#5f5f5f" transform="rotate(0.0)"/><rect x="-2.3" y="-12.6" width="4.6" height="3.299999999999999" rx=".4" fill="#5f5f5f" transform="rotate(45.0)"/><rect x="-2.3" y="-12.6" width="4.6" height="3.299999999999999" rx=".4" fill="#5f5f5f" transform="rotate(90.0)"/><rect x="-2.3" y="-12.6" width="4.6" height="3.299999999999999" rx=".4" fill="#5f5f5f" transform="rotate(135.0)"/><rect x="-2.3" y="-12.6" width="4.6" height="3.299999999999999" rx=".4" fill="#5f5f5f" transform="rotate(180.0)"/><rect x="-2.3" y="-12.6" width="4.6" height="3.299999999999999" rx=".4" fill="#5f5f5f" transform="rotate(225.0)"/><rect x="-2.3" y="-12.6" width="4.6" height="3.299999999999999" rx=".4" fill="#5f5f5f" transform="rotate(270.0)"/><rect x="-2.3" y="-12.6" width="4.6" height="3.299999999999999" rx=".4" fill="#5f5f5f" transform="rotate(315.0)"/><circle r="7.4" fill="#f1f1f1"/></g></g><path d="M15.1 16.2 Q19 14.6 23 16.2 V22.3 Q19 23.9 15.1 22.3z" fill="#5f5f5f"/><ellipse cx="19" cy="16.2" rx="2.3" ry=".7" fill="#f1f1f1"/><path d="M15.1 18.4 Q19 19.9 23 18.4 M15.1 20.4 Q19 21.9 23 20.4" stroke="#f1f1f1" stroke-width=".7" fill="none"/><text x="19.2" y="29.8" font-size="7.6" font-weight="700" text-anchor="middle" fill="#5f5f5f" font-family="Liberation Sans">API</text></svg>
<svg class="a" style="left:78px;top:540px" width="40" height="40" viewBox="0 0 40 40"><path d="M5.2 9 L5.8 14.5 Q6.5 17 10.5 18.8 L26.5 18.8 Q30.8 17 31.2 14.5 L31.9 9z" fill="#5f5f5f"/><ellipse cx="18.5" cy="9" rx="13.3" ry="3" fill="#fafafa" stroke="#5f5f5f" stroke-width=".9"/><circle cx="18" cy="22.5" r="8.2" fill="#f1f1f1"/><g transform="translate(18 22.5) rotate(22.5)"><circle r="4.6" fill="#5f5f5f"/><rect x="-1.1" y="-5.9" width="2.2" height="2.3000000000000007" rx=".4" fill="#5f5f5f" transform="rotate(0.0)"/><rect x="-1.1" y="-5.9" width="2.2" height="2.3000000000000007" rx=".4" fill="#5f5f5f" transform="rotate(45.0)"/><rect x="-1.1" y="-5.9" width="2.2" height="2.3000000000000007" rx=".4" fill="#5f5f5f" transform="rotate(90.0)"/><rect x="-1.1" y="-5.9" width="2.2" height="2.3000000000000007" rx=".4" fill="#5f5f5f" transform="rotate(135.0)"/><rect x="-1.1" y="-5.9" width="2.2" height="2.3000000000000007" rx=".4" fill="#5f5f5f" transform="rotate(180.0)"/><rect x="-1.1" y="-5.9" width="2.2" height="2.3000000000000007" rx=".4" fill="#5f5f5f" transform="rotate(225.0)"/><rect x="-1.1" y="-5.9" width="2.2" height="2.3000000000000007" rx=".4" fill="#5f5f5f" transform="rotate(270.0)"/><rect x="-1.1" y="-5.9" width="2.2" height="2.3000000000000007" rx=".4" fill="#5f5f5f" transform="rotate(315.0)"/><circle r="2.4" fill="#f1f1f1"/></g><rect x="15.1" y="30.8" width="5.8" height="1.4" fill="#5f5f5f"/></svg>
</body></html>
